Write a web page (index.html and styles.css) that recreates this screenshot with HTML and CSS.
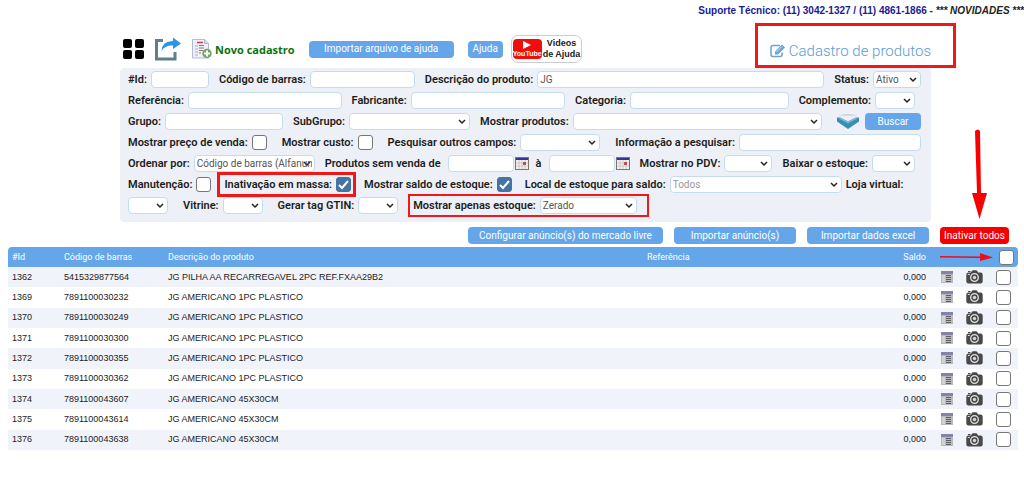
FILE: index.html
```html
<!DOCTYPE html>
<html lang="pt-BR">
<head>
    <meta charset="UTF-8">
    <meta name="viewport" content="width=device-width, initial-scale=1.0">
    <title>Cadastro de produtos</title>
    <link rel="stylesheet" href="styles.css">
</head>
<body>

<!-- Icons used more than once -->
<svg class="sprite" aria-hidden="true">
    <symbol id="calendar" viewBox="0 0 14 13">
        <rect x="0.5" y="0.5" width="13" height="12" fill="#f4f1ee" stroke="#7d7470"/>
        <rect x="1" y="1" width="12" height="2" fill="#34349a"/>
        <path d="M1 6h12M1 9h12M4 3v9M7 3v9M10 3v9" stroke="#c9c2bd" stroke-width="0.8"/>
        <rect x="8" y="5" width="3" height="3" fill="#b5544a"/>
    </symbol>
    <symbol id="details" viewBox="0 0 12 12">
        <rect width="12" height="12" fill="#b9b9bd"/>
        <rect width="12" height="3" fill="#8583ac"/>
        <rect x="1" y="4" width="3" height="7" fill="#d2d2d4"/>
        <path d="M5 4.500h5M5 6.500h5M5 8.500h5M5 10.500h5" stroke="#5d5d62"/>
    </symbol>
    <symbol id="camera" viewBox="0 0 17 14">
        <path d="M5 2.500 6 .8Q6.300.3 7 .3h3.200q.6 0 .9.5l1 1.700h2.400Q16.700 2.500 16.700 4.700v6.600q0 2.200-2.200 2.200h-12Q.3 13.500.3 11.300V4.700Q.3 2.500 2.500 2.500z" fill="#484848"/>
        <rect x="2" y="1" width="2.500" height="1" fill="#484848"/>
        <circle cx="8.500" cy="7.500" r="3.800" fill="#484848" stroke="#e4e4e4" stroke-width="1.300"/>
        <circle cx="8.500" cy="7.500" r="1.700" fill="#d5d5d5"/>
        <rect x="1.800" y="4" width="2" height="1" fill="#ddd"/>
    </symbol>
</svg>

<div class="support">
    <span>Suporte Técnico: (11) 3042-1327 / (11) 4861-1866 -</span>
    <em>*** NOVIDADES ***</em>
</div>

<header class="header">
    <div class="toolbar">
        <a href="#" class="icon-link" aria-label="Menu">
            <svg width="21" height="20" viewBox="0 0 21 20">
                <rect width="9" height="9" rx="2"/>
                <rect x="12" width="9" height="9" rx="2"/>
                <rect y="11" width="9" height="9" rx="2"/>
                <rect x="12" y="11" width="9" height="9" rx="2"/>
            </svg>
        </a>
        <a href="#" class="icon-link" aria-label="Compartilhar">
            <svg width="26" height="24" viewBox="0 0 26 24">
                <path d="M8 3.500H1.500v18.500h18.500v-7" fill="none" stroke="#5f7f8c" stroke-width="3"/>
                <path d="M6.500 14Q7 4 18 4V.5L26 6.500 18 12V8.500Q10 8 6.500 14z" fill="#2b93ea"/>
            </svg>
        </a>
        <a href="#" class="new-link">
            <svg width="20" height="20" viewBox="0 0 20 20">
                <path d="M.5.5h12l4 3.500v15H.5z" fill="#edf0f8" stroke="#b3bad3"/>
                <path d="M12.500.5v4h4" fill="#d5dcee" stroke="#a9b3d0"/>
                <path d="M5 3.500h6" stroke="#b9473f" stroke-width="1.500"/>
                <path d="M3 7h3M3 10h3M3 13h3M3 16h3" stroke="#a8afc7"/>
                <path d="M7 6.500h5M7 9h5M7 11.500h4M7 14h2" stroke="#99736f"/>
                <circle cx="15" cy="14.500" r="4.700" fill="#69a95e"/>
                <path d="M15 11.500v6M12 14.500h6" stroke="#fff" stroke-width="2"/>
            </svg>
            Novo cadastro
        </a>
        <button type="button" class="btn btn-import">Importar arquivo de ajuda</button>
        <button type="button" class="btn btn-help">Ajuda</button>
        <a href="#" class="videos">
            <span class="youtube">
                <svg width="8" height="8" viewBox="0 0 8 8"><path d="M0 0l8 4-8 4z" fill="#fff"/></svg>
                YouTube
            </span>
            <span>Videos<br>de Ajuda</span>
        </a>
    </div>
    <h1 class="title">
        <svg width="16" height="14" viewBox="0 0 16 14">
            <path d="M10 1.500H3Q1 1.500 1 3.500v7q0 2 2 2h7q2 0 2-2V8.500" fill="none" stroke="#69a3d9" stroke-width="1.500"/>
            <path d="M5 7.500 12 .5l3 3-7 7H5z" fill="#69a3d9"/>
            <path d="M6.500 8 12 2.500" stroke="#fff" stroke-width="0.700"/>
        </svg>
        Cadastro de produtos
    </h1>
</header>

<form class="filters">
    <div class="row">
        <div class="field"><label for="id">#Id:</label><input type="text" id="id" class="w-58"></div>
        <div class="field"><label for="codigo">Código de barras:</label><input type="text" id="codigo" class="w-105"></div>
        <div class="field grow"><label for="descricao">Descrição do produto:</label><input type="text" id="descricao" value="JG"></div>
        <div class="field"><label for="status">Status:</label><select id="status" class="w-48"><option>Ativo</option></select></div>
    </div>
    <div class="row row-short">
        <div class="field grow"><label for="referencia">Referência:</label><input type="text" id="referencia"></div>
        <div class="field grow"><label for="fabricante">Fabricante:</label><input type="text" id="fabricante"></div>
        <div class="field grow"><label for="categoria">Categoria:</label><input type="text" id="categoria"></div>
        <div class="field"><label for="complemento">Complemento:</label><select id="complemento" class="w-40"><option></option></select></div>
    </div>
    <div class="row">
        <div class="field"><label for="grupo">Grupo:</label><input type="text" id="grupo" class="w-118"></div>
        <div class="field"><label for="subgrupo">SubGrupo:</label><select id="subgrupo" class="w-121"><option></option></select></div>
        <div class="field grow"><label for="mostrar">Mostrar produtos:</label><select id="mostrar"><option></option></select></div>
        <div class="search">
            <a href="#" class="icon-link" aria-label="Mais filtros">
                <svg width="22" height="15" viewBox="0 0 22 15">
                    <path d="M2 1.500Q11-1 20 1.500z" fill="#c3c6ca"/>
                    <path d="M0 3.500l3 0 8 4 8-4h3v4l-11 7.500L0 7.500z" fill="#3a8db5"/>
                    <path d="M0 3.500h3l8 4 8-4h3l-11 6z" fill="#74bcd8"/>
                </svg>
            </a>
            <button type="button" class="btn btn-search">Buscar</button>
        </div>
    </div>
    <div class="row row-checks">
        <div class="field"><label for="preco">Mostrar preço de venda:</label><input type="checkbox" id="preco"></div>
        <div class="field"><label for="custo">Mostrar custo:</label><input type="checkbox" id="custo"></div>
        <div class="field"><label for="campos">Pesquisar outros campos:</label><select id="campos" class="w-80"><option></option></select></div>
        <div class="field grow"><label for="info">Informação a pesquisar:</label><input type="text" id="info"></div>
    </div>
    <div class="row row-short">
        <div class="field"><label for="ordenar">Ordenar por:</label><select id="ordenar" class="w-121"><option>Código de barras (Alfanumérico)</option></select></div>
        <div class="field field-dates grow">
            <label for="de">Produtos sem venda de</label>
            <span class="date"><input type="text" id="de"><svg width="14" height="13"><use href="#calendar"/></svg></span>
            <label for="ate">à</label>
            <span class="date"><input type="text" id="ate"><svg width="14" height="13"><use href="#calendar"/></svg></span>
        </div>
        <div class="field"><label for="pdv">Mostrar no PDV:</label><select id="pdv" class="w-48"><option></option></select></div>
        <div class="field"><label for="baixar">Baixar o estoque:</label><select id="baixar" class="w-43"><option></option></select></div>
    </div>
    <div class="row row-stock">
        <div class="field"><label for="manutencao">Manutenção:</label><input type="checkbox" id="manutencao"></div>
        <div class="field marked"><label for="massa">Inativação em massa:</label><input type="checkbox" id="massa" checked></div>
        <div class="field"><label for="saldo">Mostrar saldo de estoque:</label><input type="checkbox" id="saldo" checked></div>
        <div class="field"><label for="local">Local de estoque para saldo:</label><select id="local" class="w-172 light"><option>Todos</option></select></div>
        <label for="loja" class="label-loja">Loja virtual:</label>
    </div>
    <div class="row row-wide">
        <select id="loja" class="w-40"><option></option></select>
        <div class="field"><label for="vitrine">Vitrine:</label><select id="vitrine" class="w-40"><option></option></select></div>
        <div class="field"><label for="gtin">Gerar tag GTIN:</label><select id="gtin" class="w-40"><option></option></select></div>
        <div class="field marked marked-thin"><label for="estoque">Mostrar apenas estoque:</label><select id="estoque" class="w-97"><option>Zerado</option></select></div>
    </div>
</form>

<div class="actions">
    <button type="button" class="btn btn-config">Configurar anúncio(s) do mercado livre</button>
    <button type="button" class="btn btn-action">Importar anúncio(s)</button>
    <button type="button" class="btn btn-action">Importar dados excel</button>
    <button type="button" class="btn btn-danger">
        Inativar todos
        <svg class="arrow-down" width="16" height="90" viewBox="0 0 16 90">
            <path d="M4 2Q7-1 9 2l1 62h6L8.500 90 1 64h5z" fill="#f80000"/>
        </svg>
    </button>
</div>

<table class="products">
    <thead>
        <tr>
            <th class="col-id">#Id</th>
            <th class="col-code">Código de barras</th>
            <th class="col-name">Descrição do produto</th>
            <th class="col-ref">Referência</th>
            <th class="col-balance">Saldo</th>
            <th class="col-arrow" colspan="2">
                <svg width="53" height="8" viewBox="0 0 53 8"><path d="M0 3l40 .4V0l13 4.400L40 8V5L0 4.500z" fill="#e8101c"/></svg>
            </th>
            <th class="col-check"><input type="checkbox" aria-label="Selecionar todos"></th>
        </tr>
    </thead>
    <tbody id="productRows"></tbody>
</table>

<script>
    const products = [
        ["1362", "5415329877564", "JG PILHA AA RECARREGAVEL 2PC REF.FXAA29B2"],
        ["1369", "7891100030232", "JG AMERICANO 1PC PLASTICO"],
        ["1370", "7891100030249", "JG AMERICANO 1PC PLASTICO"],
        ["1371", "7891100030300", "JG AMERICANO 1PC PLASTICO"],
        ["1372", "7891100030355", "JG AMERICANO 1PC PLASTICO"],
        ["1373", "7891100030362", "JG AMERICANO 1PC PLASTICO"],
        ["1374", "7891100043607", "JG AMERICANO 45X30CM"],
        ["1375", "7891100043614", "JG AMERICANO 45X30CM"],
        ["1376", "7891100043638", "JG AMERICANO 45X30CM"]
    ];

    // Fill the table, one line per product
    document.getElementById('productRows').innerHTML = products.map(([id, code, name]) => `
        <tr>
            <td>${id}</td>
            <td>${code}</td>
            <td>${name}</td>
            <td></td>
            <td class="col-balance">0,000</td>
            <td class="col-details"><svg width="12" height="12"><use href="#details"/></svg></td>
            <td class="col-photo"><svg width="17" height="14"><use href="#camera"/></svg></td>
            <td class="col-check"><input type="checkbox" aria-label="Selecionar ${id}"></td>
        </tr>`).join('');
</script>

</body>
</html>
```
FILE: styles.css
```css
* {
    box-sizing: border-box;
}
body {
    margin: 0;
    font-family: Roboto, sans-serif;
    font-size: 11px;
    color: #1c1c1c;
    background: #fff;
}
svg {
    display: block;
    flex: none;
}
.sprite {
    position: absolute;
    width: 0;
    height: 0;
}

/* Top of the page */
.support {
    height: 23px;
    padding-top: 4px;
    text-align: right;
    font: bold 10px/13px "Liberation Sans", sans-serif;
    color: #1a1a96;
    white-space: nowrap;
}
.support em {
    color: #222;
}
.header {
    display: flex;
    justify-content: space-between;
    height: 45px;
    margin: 0 68px 0 123px;
}
.toolbar {
    display: flex;
    align-items: center;
    padding-top: 7px;
}
.icon-link {
    margin-right: 11px;
}
.new-link {
    display: flex;
    align-items: center;
    gap: 3px;
    margin-right: 14px;
    font: bold 11px "Open Sans", sans-serif;
    color: #0c720c;
    text-decoration: none;
    white-space: nowrap;
}
.title {
    display: flex;
    align-items: center;
    gap: 3px;
    margin: 0;
    padding: 10px 22px 0 12px;
    border: 3px solid #f01818;
    font-size: 15px;
    font-weight: 300;
    color: #5c9bd4;
    white-space: nowrap;
}
.videos {
    display: flex;
    align-items: center;
    gap: 1px;
    height: 28px;
    padding: 0 1px;
    border: 1px solid #ccc;
    border-radius: 7px;
    font: bold 9px/11px "Liberation Sans", sans-serif;
    color: #222;
    text-align: center;
    text-decoration: none;
    white-space: nowrap;
}
.youtube {
    display: flex;
    flex-direction: column;
    align-items: center;
    width: 29px;
    height: 20px;
    padding-top: 2px;
    border-radius: 4px;
    background: #f20d0d;
    color: #fff;
    font-size: 7px;
    line-height: 9px;
}

/* Buttons */
.btn {
    height: 17px;
    padding: 0;
    border: 0;
    border-radius: 4px;
    background: #64a6e9;
    color: #fff;
    font: 400 10px/16px Roboto, sans-serif;
    white-space: nowrap;
}
.btn-import {
    width: 145px;
    margin-right: 14px;
}
.btn-help {
    width: 35px;
    margin-right: 8px;
}
.btn-search {
    width: 56px;
}
.btn-config {
    width: 195px;
}
.btn-action {
    width: 122px;
}
.btn-danger {
    position: relative;
    width: 69px;
    background: #f60000;
}
.arrow-down {
    position: absolute;
    bottom: 25px;
    left: 31px;
}

/* Search form */
.filters {
    margin: 0 93px 0 120px;
    padding: 1px 10px 6px 8px;
    border-radius: 4px;
    background: #edf1f7;
}
.row {
    display: flex;
    align-items: center;
    gap: 10px;
    height: 21px;
}
.row-short {
    padding-right: 6px;
}
.row-checks,
.row-wide {
    gap: 15px;
}
.row-stock {
    gap: 13px;
}
.field {
    display: flex;
    align-items: center;
    gap: 4px;
}
.field-dates {
    gap: 7px;
}
.grow {
    flex: 1;
}
.grow > input,
.grow > select,
.date input {
    flex: 1;
    width: 0;
    min-width: 0;
}
label {
    font-weight: 600;
    white-space: nowrap;
}
.label-loja {
    margin-left: -9px;
}
input,
select {
    margin: 0;
    font: 10px Roboto, sans-serif;
    color: #555;
}
input[type="text"],
select {
    height: 17px;
    padding: 0 2px;
    border: 1px solid #c5dcec;
    border-radius: 4px;
    background: #fff;
}
select {
    appearance: none;
    background: #fff url("data:image/svg+xml,%3Csvg xmlns='http://www.w3.org/2000/svg' width='8' height='6'%3E%3Cpath d='M1 1l3 3 3-3' fill='none' stroke='%23222' stroke-width='1.5'/%3E%3C/svg%3E") no-repeat right 3px center;
}
select.light {
    color: #999;
}
input[type="checkbox"] {
    appearance: none;
    flex: none;
    width: 15px;
    height: 15px;
    border: 1px solid #777;
    border-radius: 3px;
    background: #fff;
}
input[type="checkbox"]:checked {
    border-color: #4474a4;
    background: #4474a4 url("data:image/svg+xml,%3Csvg xmlns='http://www.w3.org/2000/svg' width='11' height='10'%3E%3Cpath d='M1 5l3 3 6-7' fill='none' stroke='%23fff' stroke-width='2'/%3E%3C/svg%3E") no-repeat center;
}
.date {
    display: flex;
    flex: 1;
    align-items: center;
    gap: 1px;
}
.search {
    display: flex;
    align-items: center;
    margin-left: 5px;
}
.search .icon-link {
    margin-right: 6px;
}

.w-40 { width: 40px; }
.w-43 { width: 43px; }
.w-48 { width: 48px; }
.w-58 { width: 58px; }
.w-80 { width: 80px; }
.w-97 { width: 97px; }
.w-105 { width: 105px; }
.w-118 { width: 118px; }
.w-121 { width: 121px; }
.w-172 { width: 172px; }

/* Red frames around the options to set */
.marked {
    position: relative;
}
.marked::after {
    content: "";
    position: absolute;
    inset: -5px -5px -5px -7px;
    border: 3px solid #f01818;
    pointer-events: none;
}
.marked-thin::after {
    inset: -3px -12px -3px -5px;
    border-width: 2px;
}

.actions {
    display: flex;
    justify-content: flex-end;
    gap: 11px;
    margin: 5px 15px 3px;
}

/* Product list */
.products {
    width: calc(100% - 14px);
    height: 203px;
    margin: 0 6px 0 8px;
    border-spacing: 0;
    table-layout: fixed;
    font: 9px/11px "Liberation Sans", sans-serif;
}
.products th,
.products td {
    height: 20px;
    padding: 0 0 0 4px;
    text-align: left;
    white-space: nowrap;
}
.products th {
    background: #64a6e9;
    color: #fff;
    font-family: Roboto, sans-serif;
    font-weight: 400;
}
.products th:first-child {
    border-radius: 4px 0 0 0;
}
.products th:last-child {
    border-radius: 0 4px 4px 0;
}
.products tbody tr:nth-child(odd) {
    background: #f0f3f9;
}
.products svg,
.products input {
    display: block;
    margin: 0 auto;
}
.col-id { width: 52px; }
.col-code { width: 104px; }
.col-ref { width: 200px; }
.col-balance { width: 83px; }
.col-arrow { width: 62px; }
.col-check { width: 30px; }
.products .col-balance {
    text-align: right;
}
.products .col-check {
    padding: 0;
}
.products .col-details {
    padding-left: 11px;
}
.products .col-photo {
    padding-left: 3px;
}
.products .col-arrow {
    padding-left: 14px;
}
.products th.col-check {
    padding-left: 6px;
}
```
